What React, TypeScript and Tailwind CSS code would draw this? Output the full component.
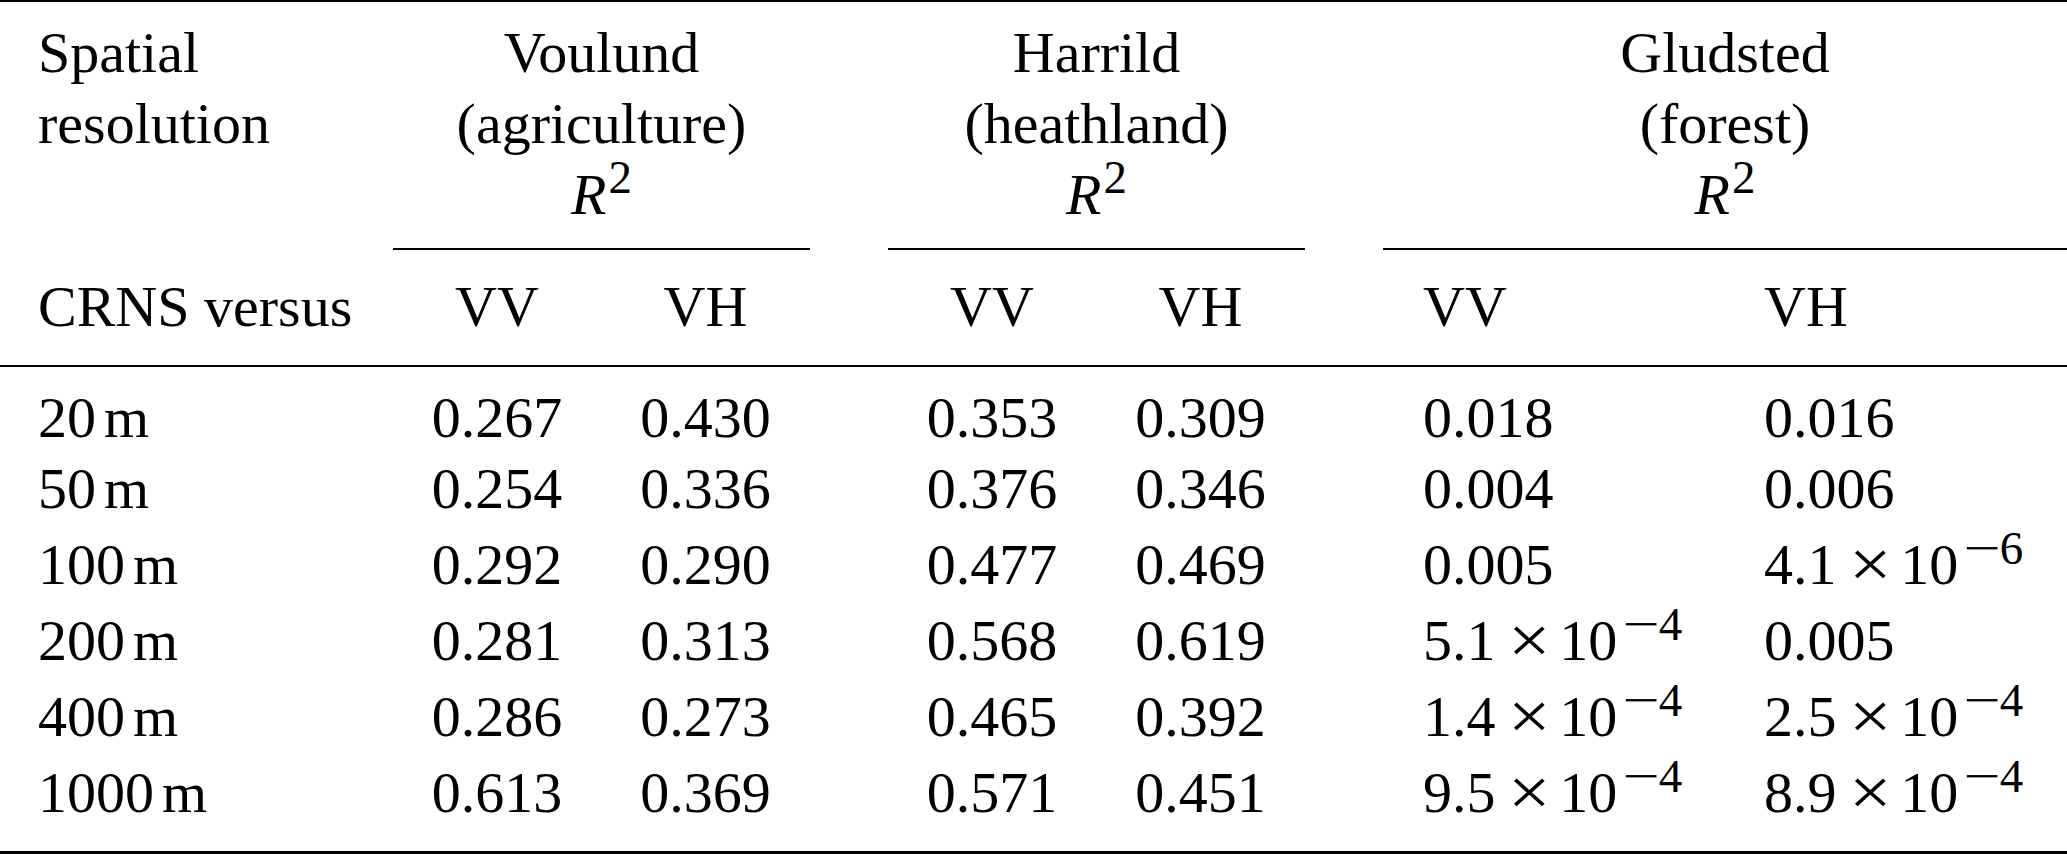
import React from "react";

const cols =
  "grid grid-cols-[393px_208px_209px_78px_208px_209px_78px_342px_342px]";

type Cell = string | { m: string; e: string };

const rows: { res: string; unit: string; cells: Cell[] }[] = [
  { res: "20", unit: "m", cells: ["0.267", "0.430", "0.353", "0.309", "0.018", "0.016"] },
  { res: "50", unit: "m", cells: ["0.254", "0.336", "0.376", "0.346", "0.004", "0.006"] },
  { res: "100", unit: "m", cells: ["0.292", "0.290", "0.477", "0.469", "0.005", { m: "4.1", e: "6" }] },
  { res: "200", unit: "m", cells: ["0.281", "0.313", "0.568", "0.619", { m: "5.1", e: "4" }, "0.005"] },
  { res: "400", unit: "m", cells: ["0.286", "0.273", "0.465", "0.392", { m: "1.4", e: "4" }, { m: "2.5", e: "4" }] },
  { res: "1000", unit: "m", cells: ["0.613", "0.369", "0.571", "0.451", { m: "9.5", e: "4" }, { m: "8.9", e: "4" }] },
];

function R2() {
  return (
    <span>
      <i>R</i>
      <sup className="text-[47px] top-[-21px] ml-[2px]">2</sup>
    </span>
  );
}

function Value({ v }: { v: Cell }) {
  if (typeof v === "string") return <>{v}</>;
  return (
    <span className="whitespace-nowrap">
      {v.m}
      <span className="ml-[17px] mr-[14px] inline-block scale-x-[1.3] scale-y-[1.15] leading-[40px]">×</span>
      10
      <sup className="ml-[7px] text-[47px] top-[-20px]">
        <span className="mx-[4px] inline-block scale-x-[1.4]">−</span>
        {v.e}
      </sup>
    </span>
  );
}

export default function App() {
  return (
    <div className="w-[2067px] h-[854px] overflow-hidden bg-white text-black font-['Liberation_Serif',serif] text-[58px] leading-[71px]">
      {/* top rule */}
      <div className="h-[2px] bg-black" />

      {/* group headers */}
      <div className={`${cols} pt-[15px]`}>
        <div className="pl-[38px]">
          Spatial
          <br />
          resolution
        </div>
        <div className="col-span-2 text-center">
          Voulund
          <br />
          (agriculture)
          <br />
          <R2 />
        </div>
        <div />
        <div className="col-span-2 text-center">
          Harrild
          <br />
          (heathland)
          <br />
          <R2 />
        </div>
        <div />
        <div className="col-span-2 text-center">
          Gludsted
          <br />
          (forest)
          <br />
          <R2 />
        </div>
      </div>

      {/* cmidrules */}
      <div className={`${cols} mt-[18px]`}>
        <div />
        <div className="col-span-2 h-[2px] bg-black" />
        <div />
        <div className="col-span-2 h-[2px] bg-black" />
        <div />
        <div className="col-span-2 h-[2px] bg-black" />
      </div>

      {/* sub headers */}
      <div className={`${cols} mt-[21px]`}>
        <div className="pl-[38px] whitespace-nowrap">CRNS versus</div>
        <div className="text-center">VV</div>
        <div className="text-center">VH</div>
        <div />
        <div className="text-center">VV</div>
        <div className="text-center">VH</div>
        <div />
        <div className="pl-[40px]">VV</div>
        <div className="pl-[39px]">VH</div>
      </div>

      {/* midrule */}
      <div className="mt-[23px] h-[2px] bg-black" />

      {/* body */}
      <div className="pt-[15px]">
        {rows.map((r) => {
          const hasSup = r.cells.some((c) => typeof c !== "string");
          return (
            <div key={r.res} className={`${cols} ${hasSup ? "h-[76px] pt-[5px]" : "h-[71px]"}`}>
              <div className="pl-[38px] whitespace-nowrap">
                {r.res}
                <span className="ml-[8px]">{r.unit}</span>
              </div>
              <div className="text-center">{r.cells[0]}</div>
              <div className="text-center">{r.cells[1]}</div>
              <div />
              <div className="text-center">{r.cells[2]}</div>
              <div className="text-center">{r.cells[3]}</div>
              <div />
              <div className="pl-[40px]">
                <Value v={r.cells[4]} />
              </div>
              <div className="pl-[39px]">
                <Value v={r.cells[5]} />
              </div>
            </div>
          );
        })}
      </div>

      {/* bottom rule */}
      <div className="mt-[23px] h-[3px] bg-black" />
    </div>
  );
}
